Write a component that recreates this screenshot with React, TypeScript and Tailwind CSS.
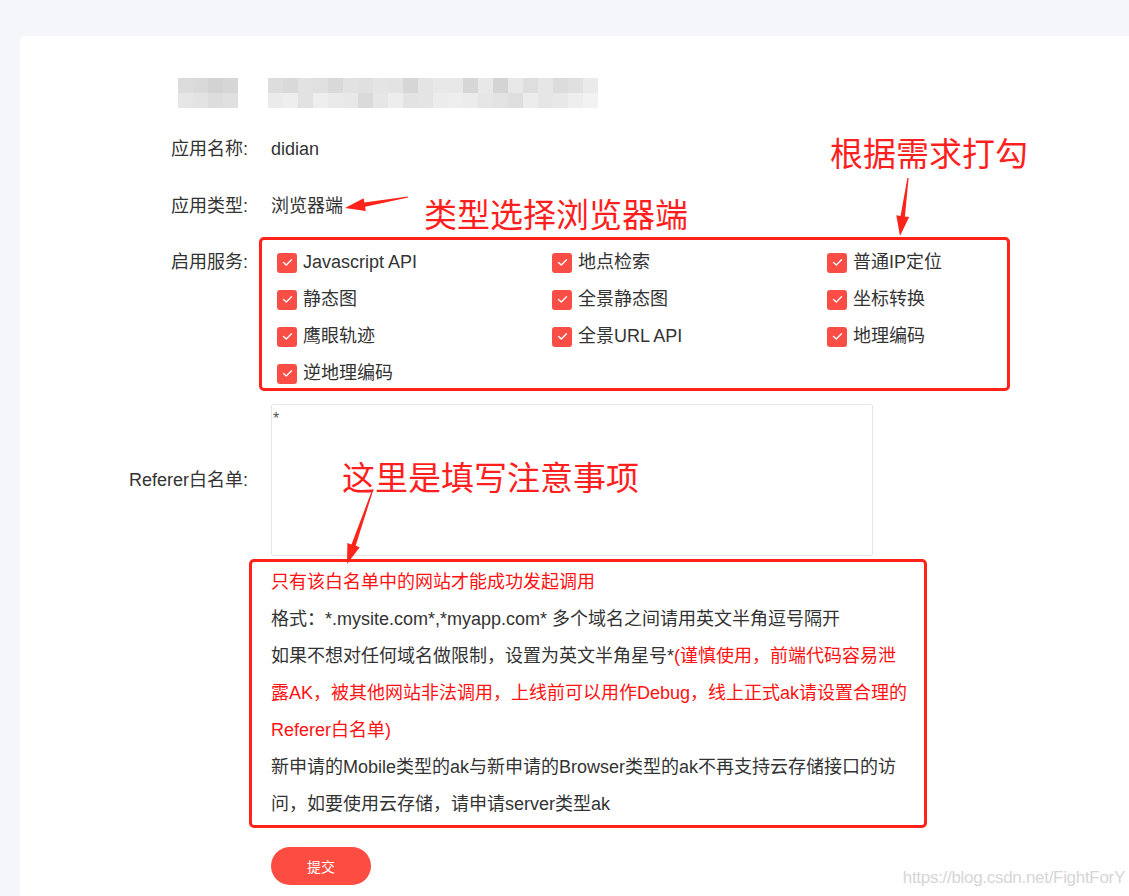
import React from 'react';

const FONT = { fontFamily: '"Liberation Sans", "Noto Sans CJK SC", sans-serif' };
const CJK = { fontFamily: '"Noto Sans CJK SC", "Liberation Sans", sans-serif' };

const services = [
  'Javascript API',
  '地点检索',
  '普通IP定位',
  '静态图',
  '全景静态图',
  '坐标转换',
  '鹰眼轨迹',
  '全景URL API',
  '地理编码',
  '逆地理编码',
];

// blurred (mosaic) header cells
const mosaicA = [
  ['#dcdcdc', '#d9d9d9', '#d3d3d3', '#d6d6d6'],
  ['#e6e6e6', '#e3e3e3', '#dddddd', '#e0e0e0'],
];
const mosaicB = [
  '#dddddd #d9d9d9 #e2e2e2 #e0e0e0 #d9d9d9 #e2e2e2 #e0e0e0 #e4e4e4 #e3e3e3 #d6d6d6 #e4e4e4 #e8e8e8 #e7e7e7 #d6d6d6 #e8e8e8 #d4d4d4 #e8e8e8 #dedede #e6e6e6 #dcdcdc #e0e0e0 #eaeaea'.split(' '),
  '#ebebeb #eeeeee #e2e2e2 #eeeeee #eaeaea #e8e8e8 #dadada #e6e6e6 #ededed #e3e3e3 #e4e4e4 #ececec #eeeeee #ececec #e6e6e6 #e3e3e3 #dedede #ececec #e6e6e6 #e8e8e8 #eeeeee #f2f2f2'.split(' '),
];

const Mosaic = ({ rows }: { rows: string[][] }) => (
  <div className="flex flex-col">
    {rows.map((r, i) => (
      <div key={i} className="flex">
        {r.map((c, j) => (
          <div key={j} className="h-[15px] w-[15px]" style={{ background: c }} />
        ))}
      </div>
    ))}
  </div>
);

const Check = () => (
  <span className="flex h-[20px] w-[20px] shrink-0 items-center justify-center rounded-[3px] bg-[#fa4d45]">
    <svg width="11" height="9" viewBox="0 0 11 9" fill="none">
      <path d="M1.5 4.5 L4.3 7 L9.5 1.8" stroke="white" strokeWidth="1.4" strokeLinecap="round" strokeLinejoin="round" />
    </svg>
  </span>
);

function arrowPoints(tx: number, ty: number, px: number, py: number) {
  const dx = px - tx;
  const dy = py - ty;
  const len = Math.hypot(dx, dy);
  const ux = dx / len;
  const uy = dy / len;
  const nx = -uy;
  const ny = ux;
  const hx = px - ux * 20;
  const hy = py - uy * 20;
  const pts = [
    [tx + nx * 0.6, ty + ny * 0.6],
    [hx + nx * 2.2, hy + ny * 2.2],
    [hx + nx * 6.5, hy + ny * 6.5],
    [px, py],
    [hx - nx * 6.5, hy - ny * 6.5],
    [hx - nx * 2.2, hy - ny * 2.2],
    [tx - nx * 0.6, ty - ny * 0.6],
  ];
  return pts.map((p) => p.join(',')).join(' ');
}

const Row = ({ label, children }: { label: string; children: React.ReactNode }) => (
  <div className="flex items-center">
    <div className="w-[228px] shrink-0 text-right text-[18px] text-[#333]">{label}</div>
    <div className="ml-[23px] min-w-0">{children}</div>
  </div>
);

export default function App() {
  return (
    <div className="relative h-[896px] w-full overflow-hidden bg-[#f5f6fa]" style={FONT}>
      <div className="ml-[20px] mt-[36px] h-[860px] rounded-tl-md bg-white pt-[42px]">
        {/* blurred header */}
        <div className="ml-[158px] flex gap-[30px]">
          <Mosaic rows={mosaicA} />
          <Mosaic rows={mosaicB} />
        </div>

        <div className="mt-[23px] flex flex-col">
          <Row label="应用名称:">
            <div className="flex h-[37px] items-center text-[18px] text-[#333]">didian</div>
          </Row>
          <div className="mt-[20px]">
            <Row label="应用类型:">
              <div className="flex h-[37px] items-center text-[18px] text-[#333]">浏览器端</div>
            </Row>
          </div>
          <div className="mt-[19px]">
            <div className="flex items-start">
              <div className="flex h-[37px] w-[228px] shrink-0 items-center justify-end text-[18px] text-[#333]">启用服务:</div>
              <div className="relative ml-[29px] grid w-[825px] grid-cols-3">
                {services.map((s) => (
                  <label key={s} className="flex h-[37px] items-center gap-[6px] text-[18px] text-[#333]">
                    <Check />
                    <span>{s}</span>
                  </label>
                ))}
                <div className="pointer-events-none absolute left-[-18px] top-[-7px] h-[154px] w-[751px] rounded-[5px] border-[3px] border-[#ff2319]" />
              </div>
            </div>
          </div>

          <div className="mt-[12px]">
            <Row label="Referer白名单:">
              <div className="h-[152px] w-[602px] rounded-[2px] border border-[#e4e6ea] px-[1px] pt-[4px] text-[16px] leading-[20px] text-[#555]">
                *
              </div>
            </Row>
          </div>

          <div className="ml-[251px] mt-[8px]">
            <div className="relative w-[640px] text-[18px] leading-[37px] text-[#333]">
              <p className="text-[#ff1212]">只有该白名单中的网站才能成功发起调用</p>
              <p>格式：*.mysite.com*,*myapp.com* 多个域名之间请用英文半角逗号隔开</p>
              <p>
                如果不想对任何域名做限制，设置为英文半角星号*
                <span className="text-[#ff1212]">
                  (谨慎使用，前端代码容易泄
                  <br />
                  露AK，被其他网站非法调用，上线前可以用作Debug，线上正式ak请设置合理的
                  <br />
                  Referer白名单)
                </span>
              </p>
              <p>
                新申请的Mobile类型的ak与新申请的Browser类型的ak不再支持云存储接口的访
                <br />
                问，如要使用云存储，请申请server类型ak
              </p>
              <div className="pointer-events-none absolute left-[-22px] top-[-5px] h-[269px] w-[678px] rounded-[5px] border-[3px] border-[#ff2319]" />
            </div>

            <button className="mt-[24px] h-[38px] w-[100px] rounded-full bg-[#fd4d42] text-[14px] text-white" style={CJK}>
              提交
            </button>
          </div>
        </div>
      </div>

      {/* annotations */}
      <svg className="pointer-events-none absolute left-0 top-0" width="1129" height="896">
        <polygon points={arrowPoints(408, 197, 345, 208)} fill="#ff2319" />
        <polygon points={arrowPoints(908, 178, 900, 236)} fill="#ff2319" />
        <polygon points={arrowPoints(372, 492, 347, 564)} fill="#ff2319" />
      </svg>
      <div className="pointer-events-none absolute left-[424px] top-[194px] text-[33px] leading-[38px] text-[#ff1f1f]" style={CJK}>
        类型选择浏览器端
      </div>
      <div className="pointer-events-none absolute left-[830px] top-[133px] text-[33px] leading-[38px] text-[#ff1f1f]" style={CJK}>
        根据需求打勾
      </div>
      <div className="pointer-events-none absolute left-[342px] top-[457px] text-[33px] leading-[38px] text-[#ff1f1f]" style={CJK}>
        这里是填写注意事项
      </div>
      <div className="pointer-events-none absolute bottom-[6px] right-[4px] text-[17px] text-[#d6d6d6]" style={{ fontFamily: '"Liberation Sans", sans-serif', letterSpacing: '-0.3px' }}>
        https://blog.csdn.net/FightForY
      </div>
    </div>
  );
}
